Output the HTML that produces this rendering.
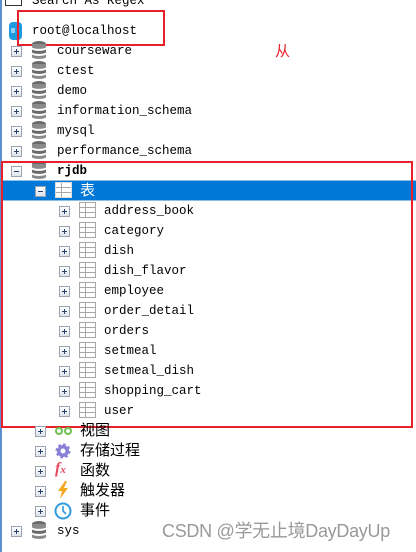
<!DOCTYPE html>
<html><head><meta charset="utf-8"><style>
body{margin:0;width:416px;height:552px;position:relative;overflow:hidden;background:#fff;font-family:"Liberation Mono","Noto Sans CJK SC",monospace;font-size:12.5px;color:#000}
.a{position:absolute}
.t{position:absolute;line-height:20px;height:20px;white-space:nowrap}
.ex{position:absolute;width:9px;height:9px;border:1px solid #9aa3b0;background:linear-gradient(#fff,#dde3ea);box-sizing:content-box}
.ex:before{content:"";position:absolute;left:2px;top:4px;width:5px;height:1px;background:#2a3f66}
.ex.p:after{content:"";position:absolute;left:4px;top:2px;width:1px;height:5px;background:#2a3f66}
.db{position:absolute;width:14px;height:18px}
.tb{position:absolute;width:17px;height:16px;border:1px solid #a8a8a8;box-sizing:border-box;background:
linear-gradient(#a8a8a8,#a8a8a8) 0 4px/100% 1px no-repeat,
linear-gradient(#a8a8a8,#a8a8a8) 0 9px/100% 1px no-repeat,
linear-gradient(#a8a8a8,#a8a8a8) 5px 0/1px 100% no-repeat,#fff}
.cjk{font-family:"Noto Sans CJK SC",sans-serif;font-size:15px}
</style></head><body>
<div class="a" style="left:0;top:0;width:2px;height:552px;background:#5b8fd0"></div>
<div class="a" style="left:5px;top:-10px;width:15px;height:14px;border:1px solid #333"></div>
<div class="t" style="left:32px;top:-9px">Search As Regex</div>

<svg class="a" style="left:9px;top:22px" width="13" height="18"><rect x="0" y="0" width="13" height="18" rx="4" fill="#1e9ae0"/><rect x="2" y="6" width="4" height="5" fill="#8fd0f5"/></svg>
<div class="t" style="left:32px;top:21px">root@localhost</div>

<div class="a" style="left:17px;top:10px;width:148px;height:36px;border:2px solid #e8202a;box-sizing:border-box"></div>
<div class="a cjk" style="left:275px;top:40px;color:#e8202a;font-size:15px">从</div>

<svg width="0" height="0" style="position:absolute"><defs><g id="dbi"><ellipse cx="7" cy="3" rx="7" ry="3" fill="#6a6a6a"/><path d="M0 3v3c0 2.5 14 2.5 14 0V3" fill="#8a8a8a"/><path d="M0 8v3c0 2.5 14 2.5 14 0V8c0 2.5-14 2.5-14 0z" fill="#6a6a6a"/><path d="M0 13v3c0 2.5 14 2.5 14 0v-3c0 2.5-14 2.5-14 0z" fill="#8a8a8a"/></g></defs></svg>

<div class="ex p" style="left:11px;top:46px"></div><svg class="db" style="left:32px;top:41px"><use href="#dbi"/></svg><div class="t" style="left:57px;top:41px">courseware</div>
<div class="ex p" style="left:11px;top:66px"></div><svg class="db" style="left:32px;top:61px"><use href="#dbi"/></svg><div class="t" style="left:57px;top:61px">ctest</div>
<div class="ex p" style="left:11px;top:86px"></div><svg class="db" style="left:32px;top:81px"><use href="#dbi"/></svg><div class="t" style="left:57px;top:81px">demo</div>
<div class="ex p" style="left:11px;top:106px"></div><svg class="db" style="left:32px;top:101px"><use href="#dbi"/></svg><div class="t" style="left:57px;top:101px">information_schema</div>
<div class="ex p" style="left:11px;top:126px"></div><svg class="db" style="left:32px;top:121px"><use href="#dbi"/></svg><div class="t" style="left:57px;top:121px">mysql</div>
<div class="ex p" style="left:11px;top:146px"></div><svg class="db" style="left:32px;top:141px"><use href="#dbi"/></svg><div class="t" style="left:57px;top:141px">performance_schema</div>
<div class="ex" style="left:11px;top:166px"></div><svg class="db" style="left:32px;top:161px"><use href="#dbi"/></svg><div class="t" style="left:57px;top:161px;font-weight:bold">rjdb</div>

<div class="a" style="left:2px;top:180px;width:414px;height:21px;background:#0078d7;border-top:1px solid #8cbfe8;border-bottom:1px solid #8cbfe8;box-sizing:border-box"></div>
<div class="ex" style="left:35px;top:186px"></div><div class="tb" style="left:55px;top:182px;border-color:#ddd"></div><div class="t cjk" style="left:80px;top:180px;color:#fff">表</div>

<div class="ex p" style="left:59px;top:206px"></div><div class="tb" style="left:79px;top:202px"></div><div class="t" style="left:104px;top:201px">address_book</div>
<div class="ex p" style="left:59px;top:226px"></div><div class="tb" style="left:79px;top:222px"></div><div class="t" style="left:104px;top:221px">category</div>
<div class="ex p" style="left:59px;top:246px"></div><div class="tb" style="left:79px;top:242px"></div><div class="t" style="left:104px;top:241px">dish</div>
<div class="ex p" style="left:59px;top:266px"></div><div class="tb" style="left:79px;top:262px"></div><div class="t" style="left:104px;top:261px">dish_flavor</div>
<div class="ex p" style="left:59px;top:286px"></div><div class="tb" style="left:79px;top:282px"></div><div class="t" style="left:104px;top:281px">employee</div>
<div class="ex p" style="left:59px;top:306px"></div><div class="tb" style="left:79px;top:302px"></div><div class="t" style="left:104px;top:301px">order_detail</div>
<div class="ex p" style="left:59px;top:326px"></div><div class="tb" style="left:79px;top:322px"></div><div class="t" style="left:104px;top:321px">orders</div>
<div class="ex p" style="left:59px;top:346px"></div><div class="tb" style="left:79px;top:342px"></div><div class="t" style="left:104px;top:341px">setmeal</div>
<div class="ex p" style="left:59px;top:366px"></div><div class="tb" style="left:79px;top:362px"></div><div class="t" style="left:104px;top:361px">setmeal_dish</div>
<div class="ex p" style="left:59px;top:386px"></div><div class="tb" style="left:79px;top:382px"></div><div class="t" style="left:104px;top:381px">shopping_cart</div>
<div class="ex p" style="left:59px;top:406px"></div><div class="tb" style="left:79px;top:402px"></div><div class="t" style="left:104px;top:401px">user</div>

<div class="a" style="left:1px;top:161px;width:412px;height:267px;border:2px solid #e8202a;box-sizing:border-box"></div>

<div class="ex p" style="left:35px;top:426px"></div><svg class="a" style="left:55px;top:426px" width="18" height="10"><circle cx="4" cy="5" r="3" fill="none" stroke="#6cc24a" stroke-width="2"/><circle cx="13" cy="5" r="3" fill="none" stroke="#6cc24a" stroke-width="2"/></svg><div class="t cjk" style="left:80px;top:420px">视图</div>
<div class="ex p" style="left:35px;top:446px"></div><svg class="a" style="left:55px;top:443px" width="16" height="16"><circle cx="8" cy="8" r="6" fill="#8a7fd6" stroke="#8a7fd6" stroke-width="3" stroke-dasharray="2.4 2.3"/><circle cx="8" cy="8" r="2.5" fill="#fff"/></svg><div class="t cjk" style="left:80px;top:440px">存储过程</div>
<div class="ex p" style="left:35px;top:466px"></div><div class="a" style="left:55px;top:460px;color:#e84a5f;font:italic bold 16px 'Liberation Serif',serif">f<span style="font-size:11px">x</span></div><div class="t cjk" style="left:80px;top:460px">函数</div>
<div class="ex p" style="left:35px;top:486px"></div><svg class="a" style="left:57px;top:481px" width="12" height="18"><path d="M8 0L1 10h4l-2 8 8-11H7l3-7z" fill="#f5a623"/></svg><div class="t cjk" style="left:80px;top:480px">触发器</div>
<div class="ex p" style="left:35px;top:506px"></div><svg class="a" style="left:54px;top:502px" width="18" height="18"><circle cx="9" cy="9" r="7.5" fill="none" stroke="#2f9be0" stroke-width="2"/><path d="M9 4v5l3 3" fill="none" stroke="#2f9be0" stroke-width="1.6"/></svg><div class="t cjk" style="left:80px;top:500px">事件</div>

<div class="ex p" style="left:11px;top:526px"></div><svg class="db" style="left:32px;top:521px"><use href="#dbi"/></svg><div class="t" style="left:57px;top:521px">sys</div>

<div class="a" style="left:162px;top:519px;font:18px 'Liberation Sans','Noto Sans CJK SC',sans-serif;color:#999;line-height:24px;letter-spacing:-0.3px">CSDN @学无止境DayDayUp</div>
</body></html>
